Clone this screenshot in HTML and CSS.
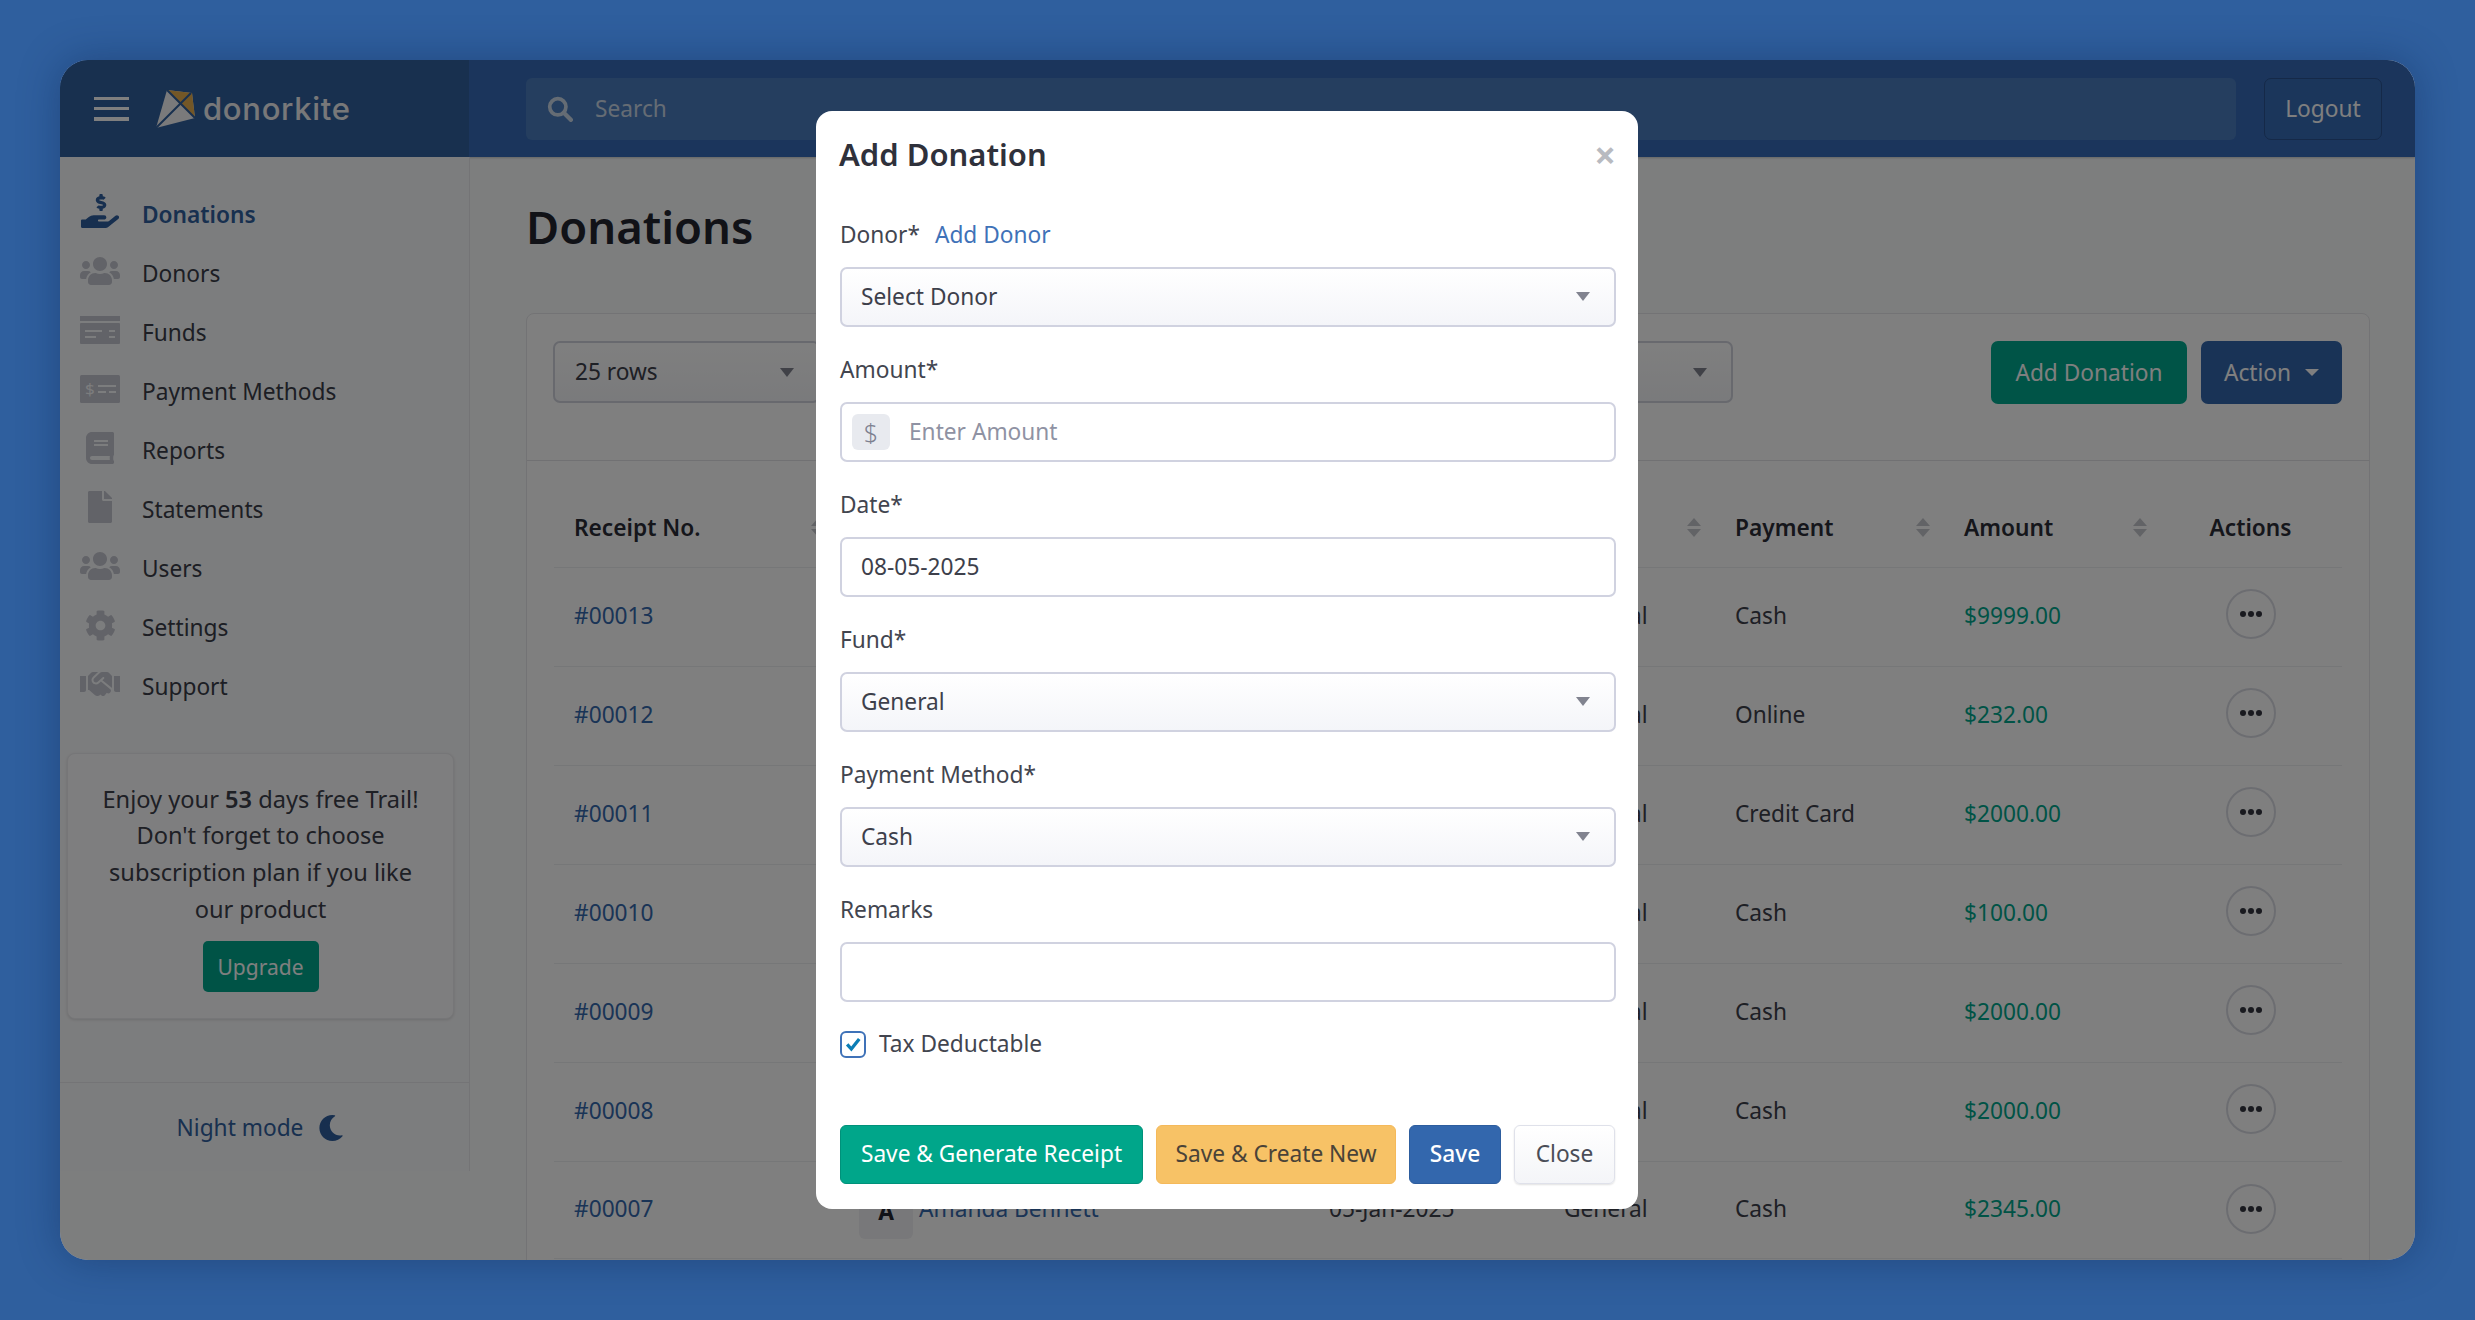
FILE: index.html
```html
<!DOCTYPE html>
<html lang="en">
<head>
<meta charset="utf-8">
<title>Donations - donorkite</title>
<link rel="stylesheet" href="styles.css">
</head>
<body>
<svg class="sprite" width="0" height="0" aria-hidden="true">
  <symbol id="i-users" viewBox="0 0 640 512"><path d="M96 224c35.3 0 64-28.7 64-64s-28.7-64-64-64-64 28.7-64 64 28.7 64 64 64zm448 0c35.3 0 64-28.7 64-64s-28.7-64-64-64-64 28.7-64 64 28.7 64 64 64zm32 32h-64c-17.6 0-33.5 7.1-45.1 18.6 40.3 22.1 68.9 62 75.1 109.4h66c17.7 0 32-14.3 32-32v-32c0-35.3-28.7-64-64-64zm-256 0c61.9 0 112-50.1 112-112S381.9 32 320 32 208 82.1 208 144s50.1 112 112 112zm76.8 32h-8.3c-20.8 10-43.9 16-68.5 16s-47.6-6-68.5-16h-8.3C179.6 288 128 339.6 128 403.2V432c0 26.5 21.5 48 48 48h288c26.5 0 48-21.5 48-48v-28.8c0-63.6-51.6-115.2-115.2-115.2zm-223.7-13.4C161.5 263.1 145.6 256 128 256H64c-35.3 0-64 28.7-64 64v32c0 17.7 14.3 32 32 32h65.9c6.3-47.4 34.9-87.3 75.2-109.4z"/></symbol>
</svg>
<div class="window">
  <header class="topbar">
    <div class="brand">
      <button class="burger" aria-label="Menu"><span></span><span></span><span></span></button>
      <svg class="kite" viewBox="0 0 40 40" aria-hidden="true">
        <polygon points="12,1 37,4 40,29 1,39" fill="#f4f5f7"/>
        <polygon points="12,1 37,4 40,29 25,15" fill="#e7ae4e"/>
        <path d="M12 1 L40 29 M0.5 39.5 L36 4" stroke="#30609f" stroke-width="2" fill="none"/>
      </svg>
      <span class="wordmark">donorkite</span>
    </div>
    <div class="topbar-main">
      <div class="search">
        <svg class="search-icon" viewBox="0 0 24 24" aria-hidden="true"><circle cx="10" cy="10" r="7.5" fill="none" stroke="currentColor" stroke-width="3.4"/><path d="M15.5 15.5 L22 22" stroke="currentColor" stroke-width="4" stroke-linecap="round"/></svg>
        <span>Search</span>
      </div>
      <button class="logout">Logout</button>
    </div>
  </header>

  <div class="body-row">
    <aside class="sidebar">
      <nav class="nav">
        <a class="nav-item active"><span class="nav-icon"><svg class="ic-hand" viewBox="0 0 576 512"><path d="M271.06,144.3l54.27,14.3a8.59,8.59,0,0,1,6.63,8.1c0,4.6-4.09,8.4-9.12,8.4h-35.6a30,30,0,0,1-11.19-2.2c-5.24-2.2-11.28-1.7-15.3,2l-19,17.5a11.68,11.68,0,0,0-2.25,2.66,11.42,11.42,0,0,0,3.88,15.74,83.42,83.42,0,0,0,34.51,11.5V240c0,8.8,7.83,16,17.37,16h17.37c9.55,0,17.38-7.2,17.38-16V222.4c32.93-3.6,57.84-31,53.5-63-3.15-23-22.46-41.3-46.56-47.7L282.68,97.4a8.59,8.59,0,0,1-6.63-8.1c0-4.6,4.09-8.4,9.12-8.4h35.6A30,30,0,0,1,332,83.1c5.23,2.2,11.28,1.7,15.3-2l19-17.5A11.31,11.31,0,0,0,368.47,61a11.43,11.43,0,0,0-3.84-15.78,83.82,83.82,0,0,0-34.52-11.5V16c0-8.8-7.82-16-17.37-16H295.37C285.82,0,278,7.2,278,16V33.6c-32.89,3.6-57.85,31-53.51,63C227.63,119.6,247,137.9,271.06,144.3ZM565.27,328.1c-11.8-10.7-30.2-10-42.6,0L430.27,402a63.64,63.64,0,0,1-40,14H272a16,16,0,0,1,0-32h78.29c15.9,0,30.71-10.9,33.25-26.6a31.2,31.2,0,0,0,.46-5.46A32,32,0,0,0,352,320H192a117.66,117.66,0,0,0-74.1,26.29L71.4,384H16A16,16,0,0,0,0,400v96a16,16,0,0,0,16,16H372.77a64,64,0,0,0,40-14L564,377a32,32,0,0,0,1.28-48.9Z"/></svg></span>Donations</a>
        <a class="nav-item"><span class="nav-icon"><svg class="ic-users" viewBox="0 0 640 512"><use href="#i-users"/></svg></span>Donors</a>
        <a class="nav-item"><span class="nav-icon"><svg class="ic-card" viewBox="0 0 40 28"><rect x="0" y="0" width="40" height="5"/><rect x="0" y="7" width="40" height="21" rx="1"/><path d="M5 15h17M29 15h6M5 21h11M29 21h6" stroke="#f9fafc" stroke-width="2"/></svg></span>Funds</a>
        <a class="nav-item"><span class="nav-icon"><svg class="ic-card" viewBox="0 0 40 28"><rect x="0" y="0" width="40" height="28" rx="1.5"/><text x="5" y="20" class="ic-dollar">$</text><path d="M18 11h18M18 17h8M29 17h7" stroke="#f9fafc" stroke-width="2"/></svg></span>Payment Methods</a>
        <a class="nav-item"><span class="nav-icon"><svg class="ic-book" viewBox="0 0 448 512"><path d="M448 360V24c0-13.3-10.7-24-24-24H96C43 0 0 43 0 96v320c0 53 43 96 96 96h328c13.3 0 24-10.7 24-24v-16c0-7.5-3.5-14.3-8.9-18.7-4.2-15.4-4.2-59.3 0-74.7 5.4-4.3 8.9-11.1 8.9-18.6zM128 134c0-3.3 2.7-6 6-6h212c3.3 0 6 2.7 6 6v20c0 3.3-2.7 6-6 6H134c-3.3 0-6-2.7-6-6v-20zm0 64c0-3.3 2.7-6 6-6h212c3.3 0 6 2.7 6 6v20c0 3.3-2.7 6-6 6H134c-3.3 0-6-2.7-6-6v-20zm253.4 250H96c-17.7 0-32-14.3-32-32 0-17.6 14.4-32 32-32h285.4c-1.9 17.1-1.9 46.9 0 64z"/></svg></span>Reports</a>
        <a class="nav-item"><span class="nav-icon"><svg class="ic-file" viewBox="0 0 384 512"><path d="M224 136V0H24C10.7 0 0 10.7 0 24v464c0 13.3 10.7 24 24 24h336c13.3 0 24-10.7 24-24V160H248c-13.2 0-24-10.8-24-24zm160-14.1v6.1H256V0h6.1c6.4 0 12.5 2.5 17 7l97.9 98c4.5 4.5 7 10.6 7 16.9z"/></svg></span>Statements</a>
        <a class="nav-item"><span class="nav-icon"><svg class="ic-users" viewBox="0 0 640 512"><use href="#i-users"/></svg></span>Users</a>
        <a class="nav-item"><span class="nav-icon"><svg class="ic-cog" viewBox="0 0 512 512"><path d="M487.4 315.7l-42.6-24.6c4.3-23.2 4.3-47 0-70.2l42.6-24.6c4.9-2.8 7.1-8.6 5.5-14-11.1-35.6-30-67.8-54.7-94.6-3.8-4.1-10-5.1-14.8-2.3L380.8 110c-17.9-15.4-38.5-27.3-60.8-35.1V25.8c0-5.6-3.9-10.5-9.4-11.7-36.7-8.2-74.3-7.8-109.2 0-5.5 1.2-9.4 6.1-9.4 11.7V75c-22.2 7.9-42.8 19.8-60.8 35.1L88.7 85.5c-4.9-2.8-11-1.9-14.8 2.3-24.7 26.7-43.6 58.9-54.7 94.6-1.7 5.4.6 11.2 5.5 14L67.3 221c-4.3 23.2-4.3 47 0 70.2l-42.6 24.6c-4.9 2.8-7.1 8.6-5.5 14 11.1 35.6 30 67.8 54.7 94.6 3.8 4.1 10 5.1 14.8 2.3l42.6-24.6c17.9 15.4 38.5 27.3 60.8 35.1v49.2c0 5.6 3.9 10.5 9.4 11.7 36.7 8.2 74.3 7.8 109.2 0 5.5-1.2 9.4-6.1 9.4-11.7v-49.2c22.2-7.9 42.8-19.8 60.8-35.1l42.6 24.6c4.9 2.8 11 1.9 14.8-2.3 24.7-26.7 43.6-58.9 54.7-94.6 1.5-5.5-.7-11.3-5.6-14.1zM256 336c-44.1 0-80-35.9-80-80s35.9-80 80-80 80 35.9 80 80-35.9 80-80 80z"/></svg></span>Settings</a>
        <a class="nav-item"><span class="nav-icon"><svg class="ic-users" viewBox="0 0 640 512"><path d="M434.7 64h-85.9c-8 0-15.7 3-21.6 8.4l-98.3 90c-.1.1-.2.3-.3.4-16.6 15.6-16.3 40.5-2.1 56 12.7 13.9 39.4 17.6 56.1 2.7.1-.1.3-.1.4-.2l79.9-73.2c6.5-5.9 16.7-5.5 22.6 1 6 6.5 5.5 16.6-1 22.6l-26.1 23.9L504 313.8c2.9 2.4 5.5 5 7.9 7.7V128l-54.6-54.6c-5.9-6-14.1-9.4-22.6-9.4zM544 128.2v223.9c0 17.7 14.3 32 32 32h64V128.2h-96zM0 384h64c17.7 0 32-14.3 32-32V128.2H0V384zm483.9-45.3L334.6 217.5l-30 27.5c-29.7 27.1-75.2 24.5-101.7-4.4-26.9-29.4-24.8-74.9 4.4-101.7L289.1 64h-83.8c-8.5 0-16.6 3.4-22.6 9.4L128 128v223.9h18.3l90.5 81.9c27.4 22.3 67.7 18.1 90-9.3l.2-.2 17.9 15.5c15.9 13 39.4 10.5 52.3-5.4l31.4-38.6 5.4 4.4c13.7 11.1 33.9 9.1 45-4.7l9.5-11.7c11.2-13.8 9.1-33.9-4.6-45.1z"/></svg></span>Support</a>
      </nav>
      <div class="trial">
        <p class="trial-text">Enjoy your <b class="trial-days">53</b> days free Trail!<br>Don't forget to choose<br>subscription plan if you like<br>our product</p>
        <button class="btn-upgrade">Upgrade</button>
      </div>
      <div class="night">
        <span>Night mode</span>
        <svg class="moon" viewBox="0 0 512 512"><path d="M283.211 512c78.962 0 151.079-35.925 198.857-94.792 7.068-8.708-.639-21.43-11.562-19.35-124.203 23.654-238.262-71.576-238.262-196.954 0-72.222 38.662-138.635 101.498-174.394 9.686-5.512 7.25-20.197-3.756-22.23A258.156 258.156 0 0 0 283.211 0c-141.309 0-256 114.511-256 256 0 141.309 114.511 256 256 256z"/></svg>
      </div>
    </aside>

    <main class="content">
      <h1 class="page-title">Donations</h1>
      <section class="card">
        <div class="toolbar">
          <div class="filters">
            <div class="page-select first"><span>25 rows</span><i class="caret"></i></div>
            <div class="page-select grow"><i class="caret"></i></div>
            <div class="page-select grow"><i class="caret"></i></div>
          </div>
          <div class="tool-actions">
            <button class="btn btn-add">Add Donation</button>
            <button class="btn btn-action">Action<i class="caret-w"></i></button>
          </div>
        </div>
        <div class="table">
          <div class="tr thead">
            <div class="th">Receipt No.<i class="sort"></i></div>
            <div class="th"></div>
            <div class="th"></div>
            <div class="th th-end"><i class="sort"></i></div>
            <div class="th">Payment<i class="sort"></i></div>
            <div class="th">Amount<i class="sort"></i></div>
            <div class="th th-center">Actions</div>
          </div>
          <div class="tr"><div class="td"><a class="link">#00013</a></div><div class="td"></div><div class="td"></div><div class="td">General</div><div class="td">Cash</div><div class="td amount">$9999.00</div><div class="td td-center"><button class="dots" aria-label="More"><i></i><i></i><i></i></button></div></div>
          <div class="tr"><div class="td"><a class="link">#00012</a></div><div class="td"></div><div class="td"></div><div class="td">General</div><div class="td">Online</div><div class="td amount">$232.00</div><div class="td td-center"><button class="dots" aria-label="More"><i></i><i></i><i></i></button></div></div>
          <div class="tr"><div class="td"><a class="link">#00011</a></div><div class="td"></div><div class="td"></div><div class="td">General</div><div class="td">Credit Card</div><div class="td amount">$2000.00</div><div class="td td-center"><button class="dots" aria-label="More"><i></i><i></i><i></i></button></div></div>
          <div class="tr"><div class="td"><a class="link">#00010</a></div><div class="td"></div><div class="td"></div><div class="td">General</div><div class="td">Cash</div><div class="td amount">$100.00</div><div class="td td-center"><button class="dots" aria-label="More"><i></i><i></i><i></i></button></div></div>
          <div class="tr"><div class="td"><a class="link">#00009</a></div><div class="td"></div><div class="td"></div><div class="td">General</div><div class="td">Cash</div><div class="td amount">$2000.00</div><div class="td td-center"><button class="dots" aria-label="More"><i></i><i></i><i></i></button></div></div>
          <div class="tr"><div class="td"><a class="link">#00008</a></div><div class="td"></div><div class="td"></div><div class="td">General</div><div class="td">Cash</div><div class="td amount">$2000.00</div><div class="td td-center"><button class="dots" aria-label="More"><i></i><i></i><i></i></button></div></div>
          <div class="tr tr-last"><div class="td"><a class="link">#00007</a></div><div class="td"><span class="avatar">A</span><a class="link">Amanda Bennett</a></div><div class="td">05-Jan-2025</div><div class="td">General</div><div class="td">Cash</div><div class="td amount">$2345.00</div><div class="td td-center"><button class="dots" aria-label="More"><i></i><i></i><i></i></button></div></div>
        </div>
      </section>
    </main>
  </div>

  <div class="backdrop"></div>

  <div class="modal" role="dialog" aria-label="Add Donation">
    <div class="modal-head">
      <h2 class="modal-title">Add Donation</h2>
      <span class="modal-close">×</span>
    </div>
    <div class="field">
      <div class="label">Donor*<a class="label-link">Add Donor</a></div>
      <div class="control select"><span>Select Donor</span><i class="caret"></i></div>
    </div>
    <div class="field">
      <div class="label">Amount*</div>
      <div class="control input-amount"><span class="addon">$</span><span class="placeholder">Enter Amount</span></div>
    </div>
    <div class="field">
      <div class="label">Date*</div>
      <div class="control"><span>08-05-2025</span></div>
    </div>
    <div class="field">
      <div class="label">Fund*</div>
      <div class="control select"><span>General</span><i class="caret"></i></div>
    </div>
    <div class="field">
      <div class="label">Payment Method*</div>
      <div class="control select"><span>Cash</span><i class="caret"></i></div>
    </div>
    <div class="field">
      <div class="label">Remarks</div>
      <div class="control"></div>
    </div>
    <div class="check-row">
      <span class="checkbox"><svg viewBox="0 0 24 24"><path d="M5 12.5 L10 18 L19.5 6" fill="none" stroke="#0b7db5" stroke-width="4"/></svg></span>
      <span>Tax Deductable</span>
    </div>
    <div class="modal-foot">
      <button class="mbtn mbtn-green">Save &amp; Generate Receipt</button>
      <button class="mbtn mbtn-yellow">Save &amp; Create New</button>
      <button class="mbtn mbtn-blue">Save</button>
      <button class="mbtn mbtn-light">Close</button>
    </div>
  </div>
</div>
</body>
</html>
```

FILE: styles.css
```css
* { box-sizing: border-box; }
html, body { margin: 0; height: 100%; }
body {
  width: 2475px;
  height: 1320px;
  padding: 60px;
  overflow: hidden;
  background: #2f5f9e;
  font-family: "Noto Sans", "Open Sans", sans-serif;
  font-size: 22.7px;
  line-height: 34px;
  color: #3d404b;
}
.sprite { position: absolute; }
button { font: inherit; cursor: pointer; }
a { color: inherit; text-decoration: none; }

.window {
  position: relative;
  display: flex;
  flex-direction: column;
  width: 2355px;
  height: 1200px;
  border-radius: 28px;
  overflow: hidden;
  background: #fbfcfd;
  box-shadow: 0 0 40px rgba(10, 30, 70, .35);
}

/* top bar */
.topbar { display: flex; height: 97px; flex: none; background: #366bb8; box-shadow: 0 1px 2px rgba(0,0,0,.2); }
.brand { display: flex; align-items: center; width: 409px; flex: none; padding-left: 34px; background: #30609f; }
.burger { display: flex; flex-direction: column; justify-content: space-between; width: 35px; height: 24px; padding: 0; border: 0; background: none; }
.burger span { display: block; height: 3.5px; background: #fff; }
.kite { width: 40px; height: 40px; margin-left: 26px; }
.wordmark { margin-left: 8px; font-family: "Inter", sans-serif; font-weight: 500; font-size: 31px; color: #f0f1f3; letter-spacing: .7px; }
.topbar-main { flex: 1; display: flex; align-items: center; padding: 0 33px 0 57px; gap: 28px; }
.search { flex: 1; height: 62px; display: flex; align-items: center; padding-left: 21px; background: #4a7dbe; border-radius: 6px; color: #cbd8e8; }
.search-icon { width: 26px; height: 26px; margin-right: 22px; }
.logout { width: 118px; height: 62px; border: 1px solid #2a5290; border-radius: 7px; background: #376cb7; color: #fff; padding: 0; }

/* sidebar */
.body-row { flex: 1; display: flex; min-height: 0; }
.sidebar { width: 410px; height: 1014px; flex: none; border-right: 1px solid #e8e9ec; padding-top: 28px; display: flex; flex-direction: column; background: #f9fafc; }
.nav { display: flex; flex-direction: column; }
.nav-item { display: flex; align-items: center; height: 59.1px; padding-left: 20px; color: #3a3d48; }
.nav-item.active { color: #30609f; font-weight: 600; }
.nav-icon { width: 40px; height: 40px; margin-right: 22px; display: flex; align-items: center; justify-content: center; fill: #c4c6d0; position: relative; top: -3px; }
.active .nav-icon { fill: #2f5f9e; top: -4px; }
.ic-hand { width: 38px; height: 34px; }
.ic-users { width: 40px; height: 32px; }
.ic-card { width: 40px; height: 28px; }
.ic-dollar { font-size: 17px; fill: #f9fafc; font-family: "Noto Sans", sans-serif; }
.ic-book { width: 28px; height: 32px; }
.ic-file { width: 24px; height: 32px; }
.ic-cog { width: 31px; height: 31px; }

.trial { width: 387px; height: 266px; margin: 36px 0 0 7px; padding: 27px 4px 0; background: #fdfdfe; border: 1px solid #ececf0; border-radius: 8px; box-shadow: 0 1px 3px rgba(0,0,0,.12); text-align: center; }
.trial-text { margin: 0 0 14px; font-size: 23.6px; line-height: 36.6px; }
.trial-days { font-weight: 600; }
.btn-upgrade { width: 116px; height: 51px; padding: 0; border: 0; border-radius: 5px; background: #00a78d; color: #fff; font-size: 21px; }
.night { margin-top: 63px; padding: 28px 8px 0 0; border-top: 1px solid #e8e9ec; display: flex; justify-content: center; align-items: center; gap: 15px; color: #30609f; }
.moon { width: 26px; height: 26px; fill: #2f5f9e; }

/* content */
.content { flex: 1; min-width: 0; padding: 0 45px 0 56px; }
.page-title { margin: 44px 0 62px; font-size: 45.4px; line-height: 50px; font-weight: 600; color: #23252f; }
.card { background: #fff; border: 1px solid #e6e7ea; border-radius: 8px; padding-bottom: 40px; }
.toolbar { display: flex; align-items: flex-start; height: 147px; padding: 27px 27px 0 26px; border-bottom: 1px solid #e2e3e6; }
.filters { display: flex; gap: 16px; width: 1180px; }
.page-select { height: 62px; display: flex; align-items: center; justify-content: space-between; padding: 0 24px 0 20px; border: 2px solid #d0d2dc; border-radius: 7px; background: linear-gradient(#fff, #f4f5f8); }
.page-select.first { width: 267px; flex: none; }
.page-select.grow { flex: 1; justify-content: flex-end; }
.caret { width: 0; height: 0; border: 7px solid transparent; border-top: 9px solid #81838f; border-bottom: 0; }
.tool-actions { margin-left: auto; display: flex; gap: 14px; }
.btn { height: 63px; padding: 0; border: 0; border-radius: 7px; color: #fff; }
.btn-add { width: 196px; background: #00a88e; }
.btn-action { width: 141px; background: #3367ad; display: flex; align-items: center; justify-content: center; gap: 14px; }
.caret-w { width: 0; height: 0; border: 7px solid transparent; border-top: 7px solid #fff; border-bottom: 0; }

.table { margin: 32px 27px 0 27px; }
.tr { display: grid; grid-template-columns: 285px 470px 235px 171px 229px 217px 181px; height: 99px; border-bottom: 1px solid #eceef1; }
.thead { height: 75px; }
.tr-last { height: 97px; }
.th { display: flex; align-items: center; justify-content: space-between; padding: 0 14px 5px 20px; font-weight: 600; color: #2b2d37; }
.th-end { justify-content: flex-end; }
.th-center { justify-content: center; padding-left: 0; padding-right: 2px; }
.td { display: flex; align-items: center; padding: 0 0 2px 20px; min-width: 0; white-space: nowrap; }
.td-center { justify-content: center; padding-left: 0; padding-right: 2px; }
.sort { display: flex; flex-direction: column; gap: 3px; width: 14px; }
.sort::before, .sort::after { content: ""; width: 0; height: 0; border: 7px solid transparent; }
.sort::before { border-top: 0; border-bottom: 8px solid #c4c6cc; }
.sort::after { border-bottom: 0; border-top: 8px solid #c4c6cc; }
.link { color: #3468ad; }
.amount { color: #00a78d; }
.avatar { flex: none; width: 54px; height: 54px; margin: 6px 6px 0 0; display: flex; align-items: center; justify-content: center; background: #f1f1f4; border-radius: 6px; font-weight: 700; color: #23252f; }
.dots { width: 50px; height: 50px; margin-bottom: 4px; padding: 0; display: flex; align-items: center; justify-content: center; gap: 2px; background: #fff; border: 2px solid #d9dbe3; border-radius: 50%; }
.tr-last .dots { margin-bottom: 0; }
.dots i { width: 6px; height: 6px; border-radius: 50%; background: #33343f; }

/* modal */
.backdrop { position: absolute; inset: 0; background: rgba(0, 0, 0, .5); }
.modal { position: absolute; left: 756px; top: 51px; width: 822px; height: 1098px; padding: 20px 22px 0 24px; background: #fff; border-radius: 16px; }
.modal-head { display: flex; justify-content: space-between; align-items: center; height: 46px; margin-bottom: 40px; }
.modal-title { margin: 0 0 0 -1px; font-size: 31px; line-height: 46px; font-weight: 600; color: #2f313b; }
.modal-close { font-size: 38px; font-weight: 700; color: #b8bac0; line-height: 46px; margin-right: 0; }
.field { margin-bottom: 25px; }
.label { height: 34px; margin-bottom: 16px; padding-top: 1px; display: flex; align-items: center; color: #42454f; }
.label-link { margin-left: 15px; color: #3f72b8; }
.control { height: 60px; display: flex; align-items: center; justify-content: space-between; padding: 0 24px 1px 19px; border: 2px solid #d0d2e0; border-radius: 7px; background: #fff; color: #3d404b; }
.select { background: linear-gradient(#fff, #f4f5f9); }
.input-amount { justify-content: flex-start; padding: 0 0 0 10px; }
.addon { width: 38px; height: 36px; display: flex; align-items: center; justify-content: center; background: #e8eaef; border-radius: 6px; color: #7d8090; margin-right: 19px; font-size: 25px; font-weight: 300; }
.placeholder { color: #8f92a3; }
.check-row { display: flex; align-items: center; gap: 13px; margin-top: 28px; height: 27px; padding-top: 1px; color: #42454f; }
.checkbox { width: 26px; height: 27px; border: 2px solid #3f72b8; border-radius: 6px; display: flex; align-items: center; justify-content: center; }
.checkbox svg { width: 20px; height: 20px; }
.modal-foot { display: flex; gap: 13px; margin-top: 68px; }
.mbtn { height: 59px; padding: 0 0 2px; border-radius: 6px; border: 1px solid transparent; }
.mbtn-green { width: 303px; background: #00a68a; color: #fff; border-color: #00917a; }
.mbtn-yellow { width: 240px; background: #f7c266; color: #4a4338; border-color: #f5b95a; }
.mbtn-blue { width: 92px; background: #3367ad; color: #fff; border-color: #2d5d9e; font-weight: 500; }
.mbtn-light { width: 101px; background: linear-gradient(#fff, #f4f5f8); color: #4a4d57; border-color: #dfe1ea; box-shadow: 0 1px 2px rgba(0,0,0,.12); }
```
